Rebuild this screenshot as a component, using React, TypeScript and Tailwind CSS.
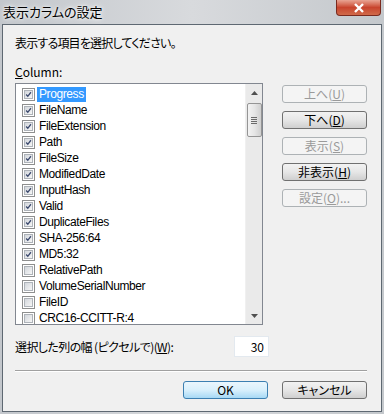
import React from 'react';

const jp = { fontFamily: '"MS UI Gothic", "Noto Sans CJK JP", sans-serif', fontFeatureSettings: '"palt"' };

type Item = { name: string; checked: boolean };

const items: Item[] = [
  { name: 'Progress', checked: true },
  { name: 'FileName', checked: true },
  { name: 'FileExtension', checked: true },
  { name: 'Path', checked: true },
  { name: 'FileSize', checked: true },
  { name: 'ModifiedDate', checked: true },
  { name: 'InputHash', checked: true },
  { name: 'Valid', checked: true },
  { name: 'DuplicateFiles', checked: true },
  { name: 'SHA-256:64', checked: true },
  { name: 'MD5:32', checked: true },
  { name: 'RelativePath', checked: false },
  { name: 'VolumeSerialNumber', checked: false },
  { name: 'FileID', checked: false },
  { name: 'CRC16-CCITT-R:4', checked: false },
];

function CheckBox({ checked }: { checked: boolean }) {
  return (
    <div className="w-[13px] h-[13px] border border-[#8e8f8f] bg-white p-[1px] shrink-0">
      <div className="w-full h-full border border-[#aeb3b9] bg-gradient-to-br from-[#d3d7dc] to-[#f6f6f6] relative">
        {checked && (
          <svg viewBox="0 0 9 9" className="absolute inset-0 w-full h-full">
            <path d="M1.5 4.5 L3.6 6.8 L7.6 1.6" fill="none" stroke="#3c4a6e" strokeWidth="1.7" />
          </svg>
        )}
      </div>
    </div>
  );
}

type BtnProps = { label: string; mn: string; suffix?: string; disabled?: boolean; primary?: boolean };

function WinButton({ label, mn, suffix, disabled, primary }: BtnProps) {
  let cls = 'border-[#707070] bg-gradient-to-b from-[#f2f2f2] via-[#e6e6e6] to-[#cfcfcf] text-black';
  if (disabled) cls = 'border-[#adb2b5] bg-[#f4f4f4] text-[#9a9a9a]';
  if (primary) cls = 'border-[#3c7fb1] bg-gradient-to-b from-[#eaf6fd] via-[#d9f0fc] to-[#a7d9f5] text-black';
  return (
    <div className={`w-[85px] h-[18px] border rounded-[3px] flex items-center justify-center text-[12px] leading-none ${cls}`}>
      <span>
        {label}
        {mn && (
          <>
            (<span className="underline">{mn}</span>)
          </>
        )}
        {suffix}
      </span>
    </div>
  );
}

export default function App() {
  return (
    <div
      className="w-[384px] h-[414px] bg-gradient-to-r from-[#c3c7cc] via-[#d8dadd] to-[#c4c8cc] flex flex-col px-[2px] pb-[2px] overflow-hidden"
      style={jp}
    >
      {/* title bar */}
      <div className="h-[24px] flex items-start relative shrink-0">
        <span
          className="text-[13px] leading-none mt-[5px] ml-[1px] text-black"
          style={{ textShadow: '0 0 6px #fff, 0 0 3px #fff' }}
        >
          表示カラムの設定
        </span>
        <div className="absolute right-[1px] top-0 w-[45px] h-[16px] rounded-b-[4px] border border-t-0 border-[#7a2a1e] bg-gradient-to-b from-[#e8a493] via-[#c8442d] to-[#d06a4a] flex items-center justify-center">
          <svg viewBox="0 0 12 10" className="w-[12px] h-[10px]">
            <path d="M2 1 L10 9 M10 1 L2 9" stroke="#fff" strokeWidth="2.4" />
          </svg>
        </div>
      </div>

      {/* body */}
      <div className="flex-1 border border-[#5e6872] bg-[#f0f0f0] flex flex-col pl-[12px] pr-[12px] text-[12px] text-black">
        <div className="h-[16px] leading-[16px] mt-[10px] tracking-[-0.8px]">表示する項目を選択してください。</div>
        <div className="h-[16px] leading-[16px] mt-[13px]">
          <span className="underline">C</span>olumn:
        </div>
        <div className="flex mt-[3px]">
          {/* listbox */}
          <div className="w-[248px] h-[242px] border border-[#828790] bg-white flex overflow-hidden">
            <div className="flex-1 flex flex-col pt-[2px]">
              {items.map((it, i) => (
                <div key={it.name} className="h-[16px] flex items-center pl-[6px] shrink-0">
                  <CheckBox checked={it.checked} />
                  <span
                    className={`ml-[2px] px-[2px] h-[15px] leading-[15px] tracking-[-0.4px] ${i === 0 ? 'bg-[#3399ff] text-white' : ''}`}
                    style={{ fontFamily: '"Liberation Sans", sans-serif' }}
                  >
                    {it.name}
                  </span>
                </div>
              ))}
            </div>
            {/* scrollbar */}
            <div className="w-[17px] bg-[#eaeaea] border-l border-[#f0f0f0] flex flex-col items-center">
              <div className="h-[17px] w-full flex items-center justify-center">
                <svg viewBox="0 0 7 4" className="w-[7px] h-[4px]">
                  <path d="M0 4 L3.5 0 L7 4 Z" fill="#505050" />
                </svg>
              </div>
              <div className="w-[15px] h-[34px] mt-[2px] border border-[#959595] rounded-[2px] bg-gradient-to-r from-[#f3f3f3] via-[#e6e6e6] to-[#d0d0d0] flex flex-col items-center justify-center gap-[1px]">
                <div className="w-[6px] h-[1px] bg-[#6b6b6b]" />
                <div className="w-[6px] h-[1px] bg-[#6b6b6b]" />
                <div className="w-[6px] h-[1px] bg-[#6b6b6b]" />
                <div className="w-[6px] h-[1px] bg-[#6b6b6b]" />
              </div>
              <div className="flex-1" />
              <div className="h-[17px] w-full flex items-center justify-center">
                <svg viewBox="0 0 7 4" className="w-[7px] h-[4px]">
                  <path d="M0 0 L3.5 4 L7 0 Z" fill="#505050" />
                </svg>
              </div>
            </div>
          </div>
          {/* side buttons */}
          <div className="ml-[19px] flex flex-col gap-[8px] pt-[2px]">
            <WinButton label="上へ" mn="U" disabled />
            <WinButton label="下へ" mn="D" />
            <WinButton label="表示" mn="S" disabled />
            <WinButton label="非表示" mn="H" />
            <WinButton label="設定" mn="O" suffix="..." disabled />
          </div>
        </div>

        {/* width row */}
        <div className="flex items-center mt-[11px] h-[21px]">
          <span className="w-[219px] tracking-[-0.6px]">
            選択した列の幅 (ピクセルで)(<span className="underline">W</span>):
          </span>
          <div className="w-[35px] h-[21px] border border-[#e3e9ef] bg-white flex items-center justify-end pr-[4px]">
            30
          </div>
        </div>

        <div className="h-[1px] bg-[#a0a0a0] border-b border-white box-content mt-[13px] mr-[2px]" />

        <div className="flex justify-end gap-[14px] mt-[9px] mr-[2px]">
          <WinButton label="OK" mn="" primary />
          <WinButton label="キャンセル" mn="" />
        </div>
      </div>
    </div>
  );
}
